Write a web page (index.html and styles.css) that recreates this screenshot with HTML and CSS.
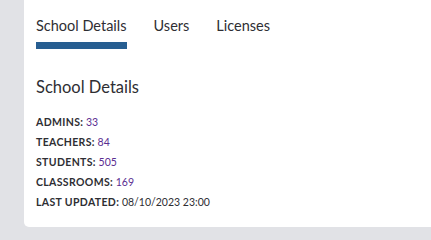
FILE: index.html
```html
<!DOCTYPE html>
<html>
<head>
<meta charset="utf-8">
<link rel="stylesheet" href="styles.css">
</head>
<body>
<div class="card">
  <nav class="tabs">
    <div class="tab active">School Details</div>
    <div class="tab">Users</div>
    <div class="tab">Licenses</div>
  </nav>
  <h2 class="title">School Details</h2>
  <ul class="stats">
    <li><span class="label">ADMINS:</span> <span class="num">33</span></li>
    <li><span class="label">TEACHERS:</span> <span class="num">84</span></li>
    <li><span class="label">STUDENTS:</span> <span class="num">505</span></li>
    <li><span class="label">CLASSROOMS:</span> <span class="num">169</span></li>
    <li><span class="label">LAST UPDATED:</span> <span class="date">08/10/2023 23:00</span></li>
  </ul>
</div>
</body>
</html>
```
FILE: styles.css
```css
html, body {
  margin: 0;
  padding: 0;
  background: #e1e2e6;
  font-family: Lato, "Liberation Sans", sans-serif;
  color: #2e2e33;
}
.card {
  margin-left: 24px;
  height: 227px;
  background: #fff;
  border-bottom-left-radius: 5px;
  padding-left: 12px;
  box-sizing: border-box;
}
.tabs {
  display: flex;
  gap: 27px;
  padding-top: 16px;
}
.tab {
  font-size: 14.5px;
  line-height: 20px;
  padding-bottom: 6px;
  border-bottom: 7px solid transparent;
}
.tab.active {
  border-bottom-color: #275e91;
}
.title {
  margin: 27px 0 0 0;
  font-size: 16.5px;
  font-weight: normal;
  line-height: 22px;
}
.stats {
  list-style: none;
  margin: 14px 0 0 0;
  padding: 0;
}
.stats li {
  font-size: 10.5px;
  line-height: 20px;
}
.label {
  font-weight: bold;
  letter-spacing: 0.35px;
}
.num {
  color: #5a2d91;
}
```
